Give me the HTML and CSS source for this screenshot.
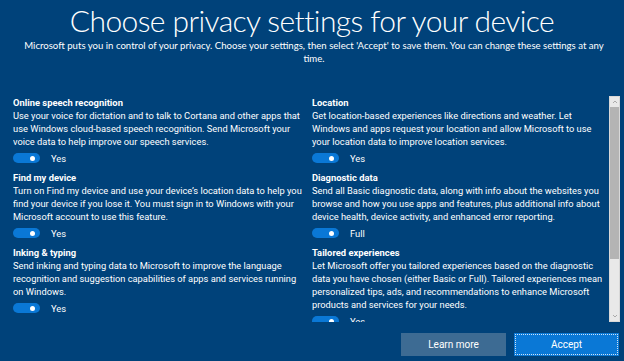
FILE: index.html
```html
<!DOCTYPE html>
<html lang="en">
<head>
  <meta charset="UTF-8">
  <title>Choose privacy settings for your device</title>
  <meta name="viewport" content="width=device-width, initial-scale=1.0">
  <link rel="stylesheet" href="styles.css">
</head>
<body>
  <div class="oobe">
    <h1 class="title">Choose privacy settings for your device</h1>
    <p class="intro">Microsoft puts you in control of your privacy. Choose your settings, then select 'Accept' to save them. You can change these settings at any time.</p>

    <div class="settings-wrap">
      <div class="settings">
        <!-- Row 1 -->
        <div class="setting">
          <div class="setting-name">Online speech recognition</div>
          <div class="setting-desc">Use your voice for dictation and to talk to Cortana and other apps that use Windows cloud-based speech recognition. Send Microsoft your voice data to help improve our speech services.</div>
          <div class="toggle-row"><span class="toggle"></span><span class="toggle-label">Yes</span></div>
        </div>
        <div class="setting">
          <div class="setting-name">Location</div>
          <div class="setting-desc">Get location-based experiences like directions and weather. Let Windows and apps request your location and allow Microsoft to use your location data to improve location services.</div>
          <div class="toggle-row"><span class="toggle"></span><span class="toggle-label">Yes</span></div>
        </div>
        <!-- Row 2 -->
        <div class="setting">
          <div class="setting-name">Find my device</div>
          <div class="setting-desc">Turn on Find my device and use your device’s location data to help you find your device if you lose it. You must sign in to Windows with your Microsoft account to use this feature.</div>
          <div class="toggle-row"><span class="toggle"></span><span class="toggle-label">Yes</span></div>
        </div>
        <div class="setting">
          <div class="setting-name">Diagnostic data</div>
          <div class="setting-desc">Send all Basic diagnostic data, along with info about the websites you browse and how you use apps and features, plus additional info about device health, device activity, and enhanced error reporting.</div>
          <div class="toggle-row"><span class="toggle"></span><span class="toggle-label">Full</span></div>
        </div>
        <!-- Row 3 -->
        <div class="setting">
          <div class="setting-name">Inking &amp; typing</div>
          <div class="setting-desc">Send inking and typing data to Microsoft to improve the language recognition and suggestion capabilities of apps and services running on Windows.</div>
          <div class="toggle-row"><span class="toggle"></span><span class="toggle-label">Yes</span></div>
        </div>
        <div class="setting">
          <div class="setting-name">Tailored experiences</div>
          <div class="setting-desc">Let Microsoft offer you tailored experiences based on the diagnostic data you have chosen (either Basic or Full). Tailored experiences mean personalized tips, ads, and recommendations to enhance Microsoft products and services for your needs.</div>
          <div class="toggle-row"><span class="toggle"></span><span class="toggle-label">Yes</span></div>
        </div>
      </div>

      <!-- Fake scrollbar -->
      <div class="scrollbar">
        <svg class="arrow" width="10" height="8" viewBox="0 0 10 8"><path d="M3 5 L5 3 L7 5" fill="none" stroke="#9a9a9a" stroke-width="0.8"/></svg>
        <div class="track"><div class="thumb"></div></div>
        <svg class="arrow" width="10" height="8" viewBox="0 0 10 8"><path d="M3 3 L5 5 L7 3" fill="none" stroke="#9a9a9a" stroke-width="0.8"/></svg>
      </div>
    </div>

    <div class="actions">
      <button type="button" class="btn btn-secondary">Learn more</button>
      <button type="button" class="btn btn-primary">Accept</button>
    </div>
  </div>
</body>
</html>
```

FILE: styles.css
```css
/* Basic resets */
* { margin: 0; padding: 0; box-sizing: border-box; }
html, body { height: 100%; }
body {
  background: #00427a;
  color: #fff;
  font-family: Roboto, Lato, sans-serif;
  overflow: hidden;
}

.oobe {
  display: flex;
  flex-direction: column;
  height: 100%;
}

/* Header */
.title {
  font-family: Lato, sans-serif;
  font-weight: 300;
  font-size: 30px;
  letter-spacing: -0.6px;
  line-height: 36px;
  text-align: center;
  padding-top: 2px;
}
.intro {
  font-family: Lato, sans-serif;
  font-size: 9.6px;
  line-height: 13px;
  text-align: center;
  padding: 1px 18px 0 22px;
  height: 58px;
}

/* Settings list + scrollbar */
.settings-wrap {
  display: flex;
  padding-left: 13px;
  height: 226px;
}
.settings {
  display: grid;
  grid-template-columns: 291px 292px;
  column-gap: 8px;
  align-content: start;
  overflow: hidden;
  height: 100%;
}
.setting {
  padding-bottom: 6px;
}
.setting-name {
  font-weight: 700;
  font-size: 9.4px;
  line-height: 13px;
}
.setting-desc {
  font-size: 9.3px;
  line-height: 13px;
}
.toggle-row {
  display: flex;
  align-items: center;
  height: 17px;
  padding-top: 3px;
}
.toggle {
  position: relative;
  width: 27px;
  height: 10px;
  border-radius: 5px;
  background: #0a78d6;
}
.toggle::after {
  content: '';
  position: absolute;
  right: 5px;
  top: 2.5px;
  width: 5px;
  height: 5px;
  border-radius: 50%;
  background: #fff;
}
.toggle-label {
  font-size: 9.4px;
  margin-left: 11px;
}

.scrollbar {
  margin-left: 5px;
  width: 11px;
  height: 100%;
  background: #e9e9e9;
  border: 1px solid #d8d8d8;
  display: flex;
  flex-direction: column;
  align-items: center;
}
.arrow { flex: none; margin: 1px 0; }
.track {
  flex: 1;
  width: 100%;
}
.thumb {
  height: 152px;
  background: #b4b4b4;
}

/* Bottom buttons */
.actions {
  display: flex;
  justify-content: flex-end;
  gap: 8px;
  padding: 11px 5px 0 0;
}
.btn {
  width: 105px;
  height: 23px;
  border: none;
  color: #fff;
  font-family: Roboto, Lato, sans-serif;
  font-size: 10px;
}
.btn-secondary {
  background: #3d6b93;
}
.btn-primary {
  background: #0a78d6;
  outline: 1px dotted #cfe3f7;
  outline-offset: -2px;
}
```
